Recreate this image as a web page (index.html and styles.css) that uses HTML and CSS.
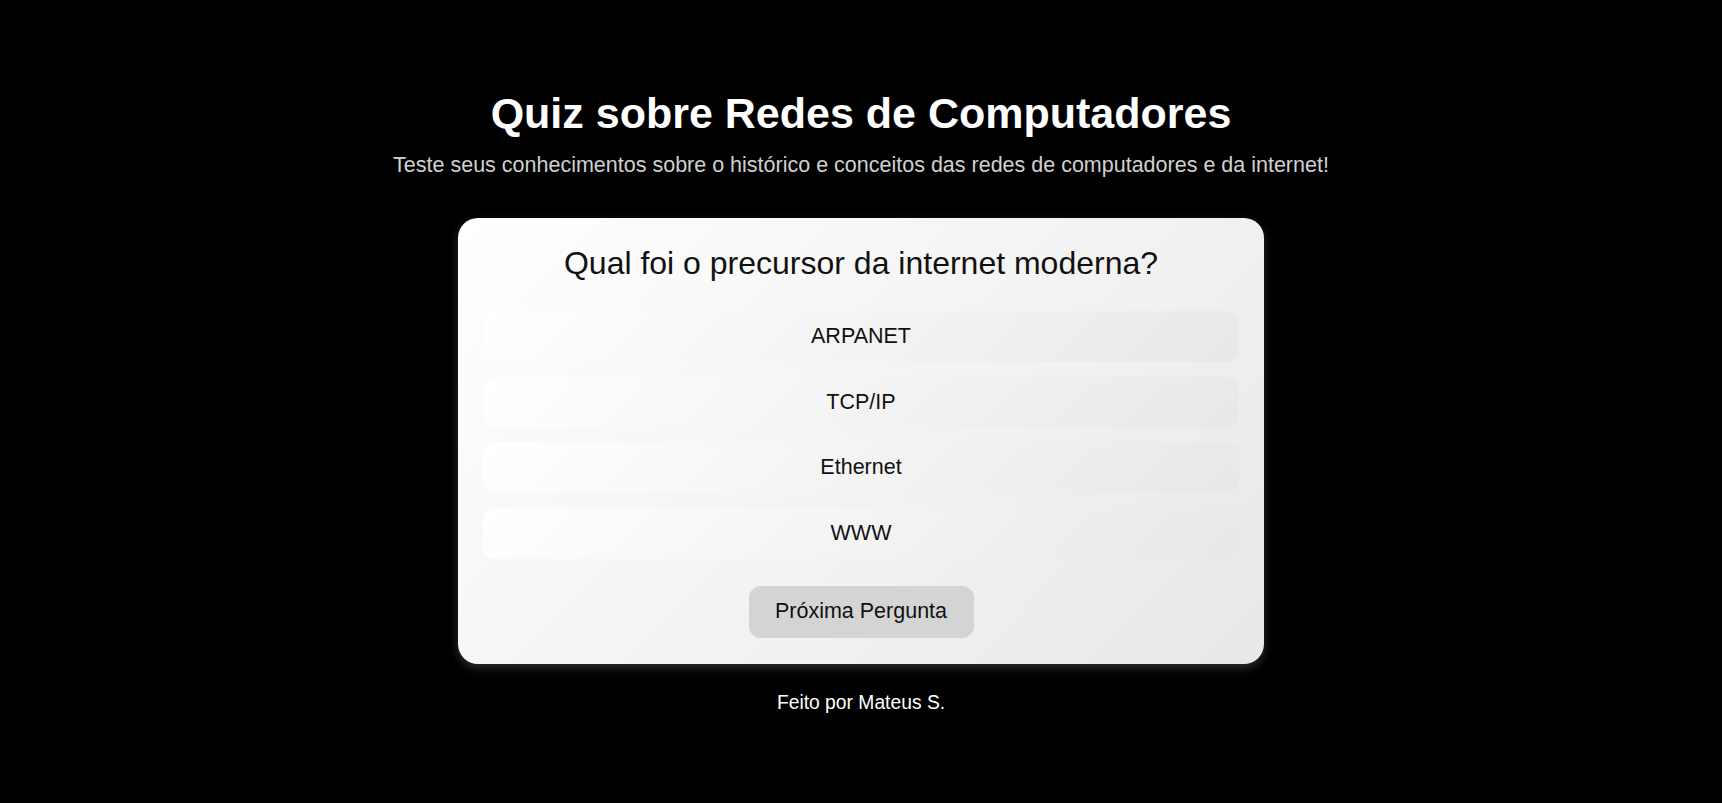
FILE: index.html
```html
<!DOCTYPE html>
<html lang="pt-BR">
<head>
<meta charset="utf-8">
<title>Quiz sobre Redes de Computadores</title>
<link rel="stylesheet" href="styles.css">
</head>
<body>
<main class="page">
  <h1 class="title">Quiz sobre Redes de Computadores</h1>
  <p class="subtitle">Teste seus conhecimentos sobre o histórico e conceitos das redes de computadores e da internet!</p>
  <section class="card">
    <h2 class="question">Qual foi o precursor da internet moderna?</h2>
    <div class="options">
      <button class="option">ARPANET</button>
      <button class="option">TCP/IP</button>
      <button class="option">Ethernet</button>
      <button class="option">WWW</button>
    </div>
    <button class="next">Próxima Pergunta</button>
  </section>
  <footer class="footer">Feito por Mateus S.</footer>
</main>
</body>
</html>
```
FILE: styles.css
```css
html, body {
  margin: 0;
  padding: 0;
  background: #000;
}
body {
  font-family: "Liberation Sans", Arial, sans-serif;
  color: #fff;
}
.page {
  display: flex;
  flex-direction: column;
  align-items: center;
  padding-top: 90px;
}
.title {
  margin: 0;
  font-size: 43px;
  line-height: 46px;
  font-weight: bold;
  color: #fff;
}
.subtitle {
  margin: 18px 0 0;
  font-size: 21.5px;
  line-height: 23px;
  color: #d0d0d0;
}
.card {
  box-sizing: border-box;
  width: 806px;
  margin-top: 41px;
  padding: 28px 25px 26px;
  border-radius: 20px;
  background: linear-gradient(135deg, #ffffff 0%, #e8e8e8 100%);
  box-shadow: 0 4px 10px rgba(255, 255, 255, 0.18);
  display: flex;
  flex-direction: column;
  align-items: center;
  color: #111;
}
.question {
  margin: 0;
  font-size: 32px;
  line-height: 34px;
  font-weight: normal;
  color: #111;
}
.options {
  align-self: stretch;
  display: flex;
  flex-direction: column;
  gap: 14.5px;
  margin-top: 31px;
}
.option {
  height: 51px;
  border: none;
  border-radius: 12px;
  background: linear-gradient(135deg, #ffffff 0%, #e8e8e8 100%);
  font-family: "Liberation Sans", Arial, sans-serif;
  font-size: 21.5px;
  color: #111;
  cursor: pointer;
}
.next {
  margin-top: 27px;
  width: 225px;
  height: 52px;
  border: none;
  border-radius: 12px;
  background: #d4d4d4;
  font-family: "Liberation Sans", Arial, sans-serif;
  font-size: 21.5px;
  color: #111;
  cursor: pointer;
}
.footer {
  margin-top: 28px;
  font-size: 19.3px;
  line-height: 21px;
  color: #fff;
}
```
